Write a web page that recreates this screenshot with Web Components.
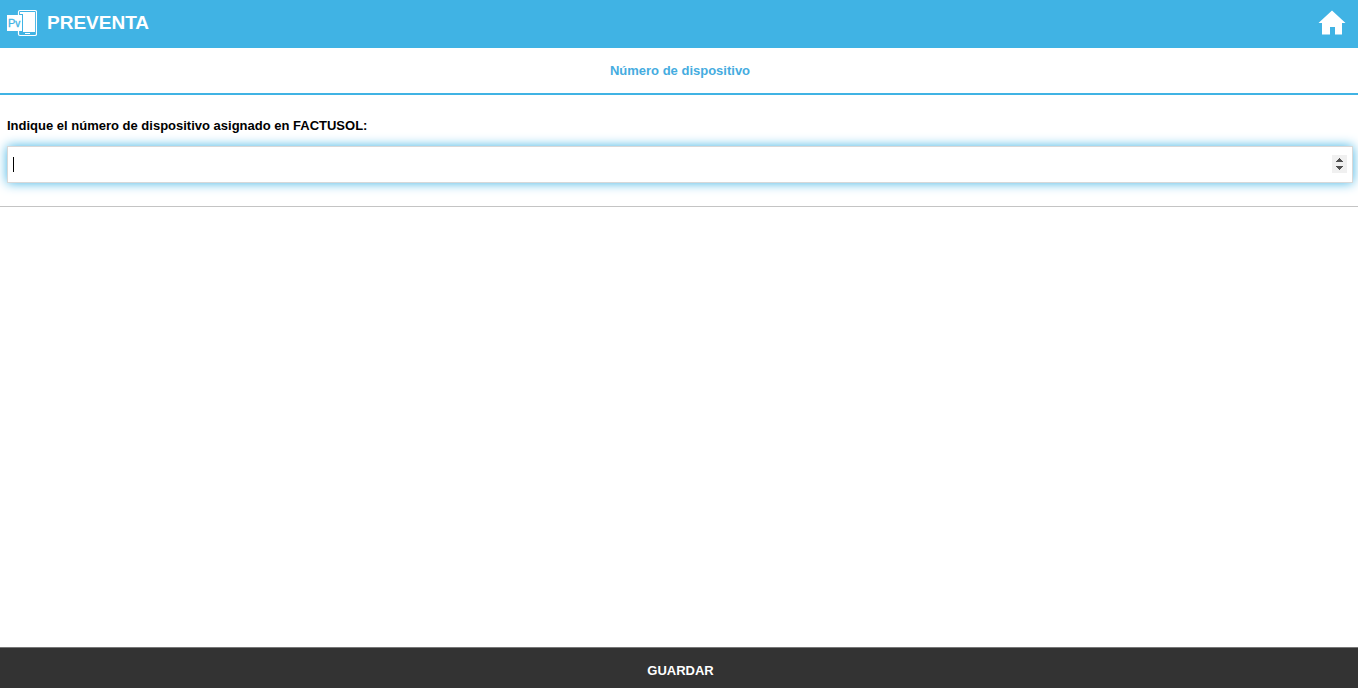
<!DOCTYPE html>
<html lang="es">
<head>
<meta charset="utf-8">
<meta name="viewport" content="width=device-width, initial-scale=1">
<title>Preventa</title>
<style>
  html, body { height: 100%; }
  body { margin: 0; background: #fff; font-family: "Liberation Sans", Arial, sans-serif; font-size: 13px; line-height: 16px; color: #000; }
</style>
</head>
<body>
<preventa-app></preventa-app>
<script>
const define = (name, html, setup) => {
  const template = document.createElement('template');
  template.innerHTML = html;
  customElements.define(name, class extends HTMLElement {
    constructor() {
      super();
      this.attachShadow({ mode: 'open' }).append(template.content.cloneNode(true));
    }
    connectedCallback() { if (setup) setup(this.shadowRoot); }
  });
};

define('product-logo', `
  <style>
    :host { display: block; width: 30px; height: 28px; }
    svg { display: block; }
    text { font: 11px "Liberation Sans", Arial, sans-serif; stroke-width: .3; }
  </style>
  <svg width="30" height="28" viewBox="0 0 30 28" aria-hidden="true">
    <rect x="11.5" y="1.5" width="18" height="25" rx="1.5" fill="none" stroke="#fff" stroke-width="1.2"/>
    <rect x="16" y="3" width="12" height="20" fill="#fff"/>
    <rect x="13" y="3" width="3" height="2" fill="#fff"/>
    <rect x="18" y="24" width="5" height="1" fill="#fff"/>
    <path d="M0 6h15v16H0z" fill="#fff"/>
    <path d="M15.5 5v18" stroke="#40b3e4"/>
    <text x="1" y="18" fill="#40b3e4" stroke="#40b3e4">P<tspan font-size="10">v</tspan></text>
  </svg>`);

define('app-header', `
  <style>
    :host { display: flex; align-items: center; justify-content: space-between; height: 48px; box-sizing: border-box; padding: 0 12px 2px 7px; background: #40b3e4; color: #fff; }
    .brand { display: flex; align-items: center; gap: 10px; }
    h1 { margin: 0; font-size: 19px; line-height: 24px; }
    a { display: block; color: #fff; }
    svg { display: block; }
  </style>
  <div class="brand"><product-logo></product-logo><h1><slot></slot></h1></div>
  <a href="#" aria-label="Inicio"><svg width="28" height="26" viewBox="0 0 28 26" fill="currentColor"><path d="M14 .5 27.5 13H24v11.5h-7V17h-5v7.500H4V13H.5z"/></svg></a>`);

define('section-title', `
  <style>
    :host { display: block; padding: 15px 0 14px 2px; border-bottom: 2px solid #40b3e4; color: #45ace0; text-align: center; }
    h2 { margin: 0; font-size: 13px; line-height: 16px; }
  </style>
  <h2><slot></slot></h2>`);

define('number-field', `
  <style>
    :host { display: block; padding: 23px 5px 23px 7px; border-bottom: 1px solid #c4c4c4; }
    label { display: block; margin-bottom: 12px; font-weight: bold; }
    .box { position: relative; display: flex; align-items: center; height: 37px; box-sizing: border-box; padding: 0 5px 1px; border: 1px solid #d8d8d8; background: #fff; box-shadow: 0 0 12px #40b3e4; }
    input { flex: 1; min-width: 0; height: 34px; box-sizing: border-box; padding: 0; border: 0; outline: 0; background: none; font: 13px "Liberation Sans", Arial, sans-serif; appearance: textfield; caret-color: transparent; }
    input::-webkit-inner-spin-button { appearance: none; margin: 0; }
    .caret { position: absolute; left: 5px; top: 10px; width: 1px; height: 15px; background: #000; }
    .steps { display: grid; background: #f0f0f0; }
    button { display: flex; justify-content: center; width: 15px; height: 9px; padding: 0; border: 0; background: none; }
    .up { align-items: flex-end; }
    .down { align-items: flex-start; }
    svg { display: block; fill: #505050; }
  </style>
  <label for="device"><slot></slot></label>
  <div class="box">
    <input id="device" type="number">
    <span class="caret"></span>
    <div class="steps">
      <button class="up" type="button" aria-label="Aumentar"><svg width="7" height="6" viewBox="0 0 7 6"><path d="M3 0h1v1h1v1h1v1h1v1H0V3h1V2h1V1h1z"/></svg></button>
      <button class="down" type="button" aria-label="Disminuir"><svg width="7" height="6" viewBox="0 0 7 6"><path d="M0 2h7v1H6v1H5v1H4v1H3V5H2V4H1V3H0z"/></svg></button>
    </div>
  </div>`, root => {
    const input = root.querySelector('input');
    const caret = root.querySelector('.caret');
    input.oninput = () => { caret.style.display = 'none'; input.style.caretColor = 'auto'; };
    root.querySelector('.up').onclick = () => { input.stepUp(); input.oninput(); };
    root.querySelector('.down').onclick = () => { input.stepDown(); input.oninput(); };
    input.focus();
  });

define('save-bar', `
  <style>
    :host { display: block; background: #333; }
    button { display: block; width: 100%; height: 41px; padding: 5px 0 0 3px; border: 0; border-top: 1px solid #777; background: none; color: #fff; font: bold 13px/16px "Liberation Sans", Arial, sans-serif; cursor: pointer; }
  </style>
  <button type="button"><slot></slot></button>`);

define('preventa-app', `
  <style>
    :host { display: flex; flex-direction: column; min-height: 100%; }
    main { flex: 1; }
  </style>
  <app-header>PREVENTA</app-header>
  <main>
    <section-title>Número de dispositivo</section-title>
    <number-field>Indique el número de dispositivo asignado en FACTUSOL:</number-field>
  </main>
  <save-bar>GUARDAR</save-bar>`);
</script>
</body>
</html>
